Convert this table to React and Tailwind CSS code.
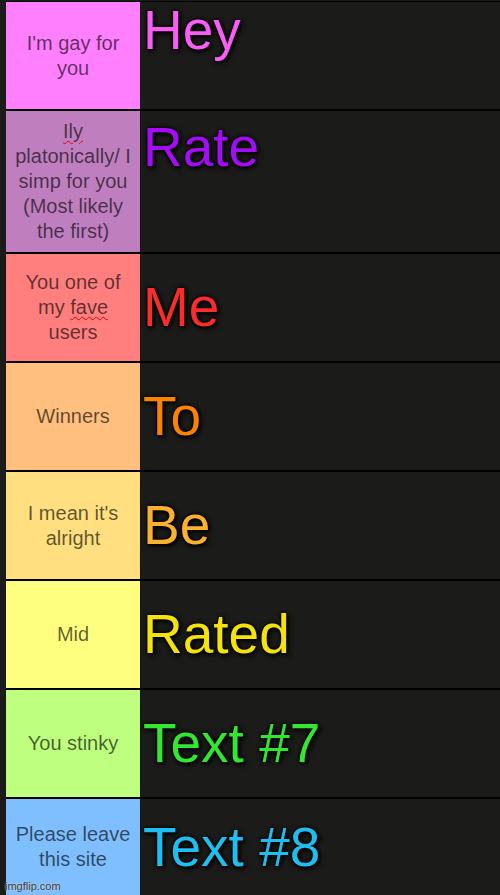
const tiers = [
  {
    label: "I'm gay for you",
    bg: "bg-[#ff7fff]",
    text: "Hey",
    color: "text-[#f65ef6]",
    rowClass: "h-[107px] items-start",
    textClass: "pt-[1px]",
  },
  {
    label: (
      <>
        <span className="underline decoration-wavy decoration-red-600 decoration-1 underline-offset-2">
          Ily
        </span>{" "}
        platonically/ I simp for you (Most likely the first)
      </>
    ),
    bg: "bg-[#bf7fbf]",
    text: "Rate",
    color: "text-[#a30cf5]",
    rowClass: "h-[141px] items-start",
    textClass: "pt-[9px]",
  },
  {
    label: (
      <>
        You one of my{" "}
        <span className="underline decoration-wavy decoration-red-600 decoration-1 underline-offset-2">
          fave
        </span>{" "}
        users
      </>
    ),
    bg: "bg-[#ff7f7f]",
    text: "Me",
    color: "text-[#fa2d2d]",
    rowClass: "h-[107px] items-center",
  },
  {
    label: "Winners",
    bg: "bg-[#ffbf7f]",
    text: "To",
    color: "text-[#fb8300]",
    rowClass: "h-[107px] items-center",
  },
  {
    label: "I mean it's alright",
    bg: "bg-[#ffdf7f]",
    text: "Be",
    color: "text-[#fab12c]",
    rowClass: "h-[107px] items-center",
  },
  {
    label: "Mid",
    bg: "bg-[#ffff7f]",
    text: "Rated",
    color: "text-[#f3e30a]",
    rowClass: "h-[107px] items-center",
  },
  {
    label: "You stinky",
    bg: "bg-[#bfff7f]",
    text: "Text #7",
    color: "text-[#32e632]",
    rowClass: "h-[107px] items-center",
  },
  {
    label: "Please leave this site",
    bg: "bg-[#7fbfff]",
    text: "Text #8",
    color: "text-[#1ebff0]",
    rowClass: "h-[96px] items-center",
  },
];

export default function App() {
  return (
    <div
      className="relative w-[500px] h-[895px] overflow-hidden bg-[#1b1b19] pl-[6px] pt-[1px]"
      style={{ fontFamily: '"Liberation Sans", Arial, sans-serif' }}
    >
      <div className="flex flex-col border-t border-black">
        {tiers.map((tier, i) => (
          <div
            key={i}
            className={`flex shrink-0 ${i < tiers.length - 1 ? "border-b-2 border-black" : ""} box-content ${tier.rowClass}`}
          >
            <div
              className={`w-[135px] h-full shrink-0 self-stretch border-r border-[#111] flex items-center justify-center px-[8px] text-center text-[20px] leading-[25px] text-[rgba(0,0,0,0.63)] ${tier.bg}`}
            >
              <div>{tier.label}</div>
            </div>
            <div
              className={`pl-[2px] text-[55px] leading-none whitespace-nowrap [text-shadow:0_0_2px_#000,0_0_4px_#000,2px_2px_5px_#000] ${tier.color} ${tier.textClass || ""}`}
            >
              {tier.text}
            </div>
          </div>
        ))}
      </div>

      {/* watermark */}
      <div className="absolute left-[5px] bottom-[3px] text-[11px] leading-none text-[#3d3d3d] [text-shadow:0_0_2px_#ddd]">
        imgflip.com
      </div>
    </div>
  );
}
